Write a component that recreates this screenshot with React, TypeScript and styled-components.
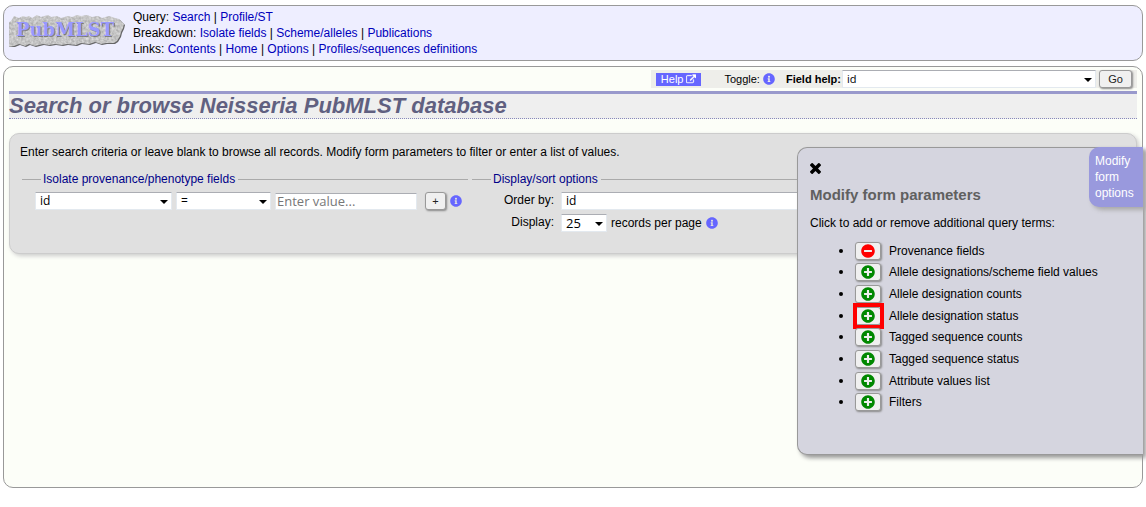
import React from "react";
import styled, { createGlobalStyle } from "styled-components";
import { FaInfoCircle, FaMinusCircle, FaPlusCircle } from "react-icons/fa";

const GlobalStyle = createGlobalStyle`
  * { box-sizing: border-box; }
  body {
    margin: 0;
    background: #fff;
    color: #000;
    font: 12px/16px "Liberation Sans", Arial, sans-serif;
  }
`;

const Page = styled.div`
  position: relative;
  display: flex;
  flex-direction: column;
  gap: 5px;
  min-height: 100vh;
  padding: 5px 3px 19px;
  overflow: hidden;
`;

const Header = styled.header`
  display: flex;
  gap: 4px;
  padding: 3px 5px;
  border: 1px solid #999;
  border-radius: 10px;
  background: #eef;
`;

const LogoLink = styled.a`
  padding-top: 4px;
  svg { display: block; }
`;

const NavLink = styled.a`
  color: #00b;
  text-decoration: none;
`;

const Main = styled.main`
  flex: 1;
  padding: 3px 5px;
  border: 1px solid #999;
  border-radius: 10px;
  background: #fcfef8;
`;

const Toolbar = styled.form`
  display: flex;
  align-items: center;
  width: fit-content;
  height: 18px;
  margin: 0 0 3px auto;
  padding: 0 5px;
  background: #eeeeea;
  font-size: 11px;
`;

const HelpLink = styled.a`
  display: flex;
  align-items: center;
  gap: 3px;
  height: 13px;
  margin-right: 23px;
  padding: 0 5px;
  background: #66f;
  color: #fff;
  text-decoration: none;
`;

const Toggle = styled.div`
  display: flex;
  align-items: center;
  gap: 3px;
  margin-right: 11px;
`;

const FieldHelpLabel = styled.label`
  margin-right: 1px;
  font-weight: bold;
`;

const InfoLink = styled.a`
  display: flex;
  color: #66f;
  font-size: 12px;
`;

const SelectBox = styled.span<{ $width: string }>`
  display: grid;
  align-items: center;
  width: ${(p) => p.$width};
  &::after {
    content: "";
    grid-area: 1 / 1;
    justify-self: end;
    margin: 2px 4px 0 0;
    border: 4px solid transparent;
    border-top-color: #000;
    border-bottom-width: 0;
    pointer-events: none;
  }
`;

const Select = styled.select<{ $size?: string }>`
  grid-area: 1 / 1;
  width: 100%;
  height: 18px;
  margin: 0;
  padding: 0 4px;
  appearance: none;
  border: 1px solid #e3e9ef;
  border-top-color: #abadb3;
  border-radius: 0;
  background: #fff;
  color: #000;
  font: ${(p) => p.$size || "12px"} "Open Sans", Tahoma, sans-serif;
  line-height: 16px;
`;

const Button = styled.button<{ $width: string }>`
  display: flex;
  align-items: center;
  justify-content: center;
  width: ${(p) => p.$width};
  height: 18px;
  padding: 0;
  border: 1px solid #999;
  border-radius: 3px;
  background: #f0f0f0;
  box-shadow: 1px 1px 2px #888;
  color: #222;
  font: 11px "Liberation Sans", Arial, sans-serif;
`;

const Title = styled.h1`
  margin: 0 0 14px;
  border-top: 3px solid #99c;
  border-bottom: 1px dotted #88b;
  background: #efefef;
  color: #606080;
  font: italic bold 22px/24px "Liberation Sans", Arial, sans-serif;
`;

const QueryBox = styled.form`
  min-height: 121px;
  padding: 10px;
  border: 1px solid #ccc;
  border-radius: 10px;
  background: #e0e0e0;
  box-shadow: 2px 2px 4px #ccc;
`;

const Intro = styled.p`
  margin: 0 0 11px;
`;

const Fieldsets = styled.div`
  display: flex;
  gap: 4px;
  padding-left: 2px;
`;

const Fieldset = styled.fieldset`
  min-width: 0;
  margin: 0;
  padding: 5px 6px 0 13px;
  border: 0 solid #aaa;
  border-top-width: 1px;
`;

const Legend = styled.legend`
  margin-left: 6px;
  padding: 0 3px 0 2px;
  color: #008;
`;

const FieldRow = styled.div`
  display: flex;
  align-items: center;
  gap: 4px;
`;

const ValueInput = styled.input`
  width: 142px;
  height: 17px;
  margin-right: 4px;
  padding: 0 1px;
  border: 1px solid #e3e9ef;
  border-top-color: #abadb3;
  background: #fff;
  font: 13px/15px "Open Sans", Tahoma, sans-serif;
  &::placeholder { color: #777; }
`;

const OptionGrid = styled.div`
  display: grid;
  grid-template-columns: 69px auto;
  gap: 4px 7px;
`;

const OptionLabel = styled.label`
  text-align: right;
`;

const SidePanel = styled.aside`
  position: absolute;
  top: 147px;
  right: 3px;
  width: 346px;
  height: 308px;
  padding: 15px 12px;
  border: 1px solid #999;
  border-right: 0;
  border-radius: 10px 0 0 10px;
  background: #d5d5df;
  box-shadow: 3px 3px 4px #999;
`;

const PanelTab = styled.a`
  position: absolute;
  top: -1px;
  right: 0;
  width: 54px;
  padding: 6px;
  border-radius: 10px 0 0 10px;
  background: #99d;
  box-shadow: 3px 3px 4px #aaa;
  color: #fff;
  text-decoration: none;
`;

const CloseButton = styled.button`
  display: block;
  padding: 0;
  border: 0;
  background: none;
  svg { display: block; }
`;

const PanelTitle = styled.h2`
  margin: 11px 0 10px;
  color: #606060;
  font-size: 15px;
  line-height: 20px;
`;

const PanelText = styled.p`
  margin: 0 0 9px;
`;

const TermList = styled.ul`
  display: grid;
  grid-auto-rows: 1fr;
  height: 173px;
  margin: 0;
  padding: 0 0 0 29px;
  list-style: none;
`;

const Term = styled.li`
  display: flex;
  align-items: center;
  &::before {
    content: "";
    width: 4px;
    height: 4px;
    margin-right: 12px;
    border-radius: 50%;
    background: #000;
  }
`;

const TermLabel = styled.label`
  margin-left: 8px;
`;

const TermButton = styled(Button)<{ $marked: boolean }>`
  position: relative;
  font-size: 14px;
  &::after {
    content: "";
    display: ${(p) => (p.$marked ? "block" : "none")};
    position: absolute;
    inset: -5px -4px -5px -3px;
    border: 4px solid #f00;
  }
`;

const Logo = () => (
  <svg width="120" height="34" viewBox="0 0 120 34" role="img" aria-label="PubMLST">
    <defs>
      <filter id="stone" x="-5%" y="-10%" width="110%" height="125%" colorInterpolationFilters="sRGB">
        <feTurbulence type="fractalNoise" baseFrequency="0.4" numOctaves="2" seed="4" result="noise" />
        <feColorMatrix in="noise" type="matrix" values="0.3 0 0 0 0.62  0.3 0 0 0 0.62  0.3 0 0 0 0.62  0 0 0 0 1" />
        <feComposite in2="SourceGraphic" operator="in" result="grain" />
        <feDropShadow in="grain" dx="1" dy="1" stdDeviation="0.6" floodColor="#555" floodOpacity="0.9" />
      </filter>
    </defs>
    <path
      filter="url(#stone)"
      fill="#bbb"
      d="M2 8 5 3l5 2 4-2 3 1 3-1 3 2 5-3 4 2 7-2 3 2 6-1 4 2 7-2 4 1 5-2 4 1 6-1 5 2 6-1 4 2 7-2 6 2 4 1 3 3 2 2-1 4-2 4-1 4-3 5-3 2-8 0-5 1-6-2-6 2-8-1-5 2-9-1-5 1-7-1-6 1-6-1-8 2-6-2-4 2-6-2-5 2-6 1-3-2-4 0-2-3-4-2 2-6-2-4z"
    />
    <g fontFamily='"DejaVu Serif", serif' fontWeight="bold" fontSize="18">
      <text x="8" y="24" fill="#555" opacity="0.6">PubMLST</text>
      <text x="7" y="23" fill="#99f">PubMLST</text>
    </g>
  </svg>
);

const ExternalIcon = () => (
  <svg width="10" height="10" viewBox="0 0 1792 1600" aria-hidden="true">
    <path
      fill="currentColor"
      d="M1408 928v320q0 119-84.500 203.500T1120 1536H288q-119 0-203.500-84.500T0 1248V416q0-119 84.500-203.500T288 128h704q14 0 23 9t9 23v64q0 14-9 23t-23 9H288q-66 0-113 47t-47 113v832q0 66 47 113t113 47h832q66 0 113-47t47-113V928q0-14 9-23t23-9h64q14 0 23 9t9 23zM1792 64v512q0 26-19 45t-45 19-45-19l-176-176-652 652q-10 10-23 10t-23-10L695 983q-10-10-10-23t10-23l652-652-176-176q-19-19-19-45t19-45 45-19h512q26 0 45 19t19 45z"
      stroke="currentColor"
      strokeWidth="60"
    />
  </svg>
);

const CloseIcon = () => (
  <svg width="11" height="11" viewBox="110 366 1188 1188" aria-hidden="true">
    <path d="M1298 1322q0 40-28 68l-136 136q-28 28-68 28t-68-28l-294-294-294 294q-28 28-68 28t-68-28l-136-136q-28-28-28-68t28-68l294-294-294-294q-28-28-28-68t28-68l136-136q28-28 68-28t68 28l294 294 294-294q28-28 68-28t68 28l136 136q28 28 28 68t-28 68l-294 294 294 294q28 28 28 68z" />
  </svg>
);

const menu = [
  { name: "Query", links: ["Search", "Profile/ST"] },
  { name: "Breakdown", links: ["Isolate fields", "Scheme/alleles", "Publications"] },
  { name: "Links", links: ["Contents", "Home", "Options", "Profiles/sequences definitions"] },
];

const terms = [
  { label: "Provenance fields", shown: true },
  { label: "Allele designations/scheme field values" },
  { label: "Allele designation counts" },
  { label: "Allele designation status", marked: true },
  { label: "Tagged sequence counts" },
  { label: "Tagged sequence status" },
  { label: "Attribute values list" },
  { label: "Filters" },
];

const Info = () => (
  <InfoLink href="#info" aria-label="Information">
    <FaInfoCircle />
  </InfoLink>
);

export default function App() {
  return (
    <Page>
      <GlobalStyle />
      <Header>
        <LogoLink href="#home">
          <Logo />
        </LogoLink>
        <nav>
          {menu.map((line) => (
            <div key={line.name}>
              {line.name}:{" "}
              {line.links.map((text, i) => (
                <React.Fragment key={text}>
                  {i > 0 && " | "}
                  <NavLink href="#nav">{text}</NavLink>
                </React.Fragment>
              ))}
            </div>
          ))}
        </nav>
      </Header>

      <Main>
        <Toolbar>
          <HelpLink href="#help">
            Help <ExternalIcon />
          </HelpLink>
          <Toggle>
            Toggle: <Info />
          </Toggle>
          <FieldHelpLabel htmlFor="field-help">Field help:</FieldHelpLabel>
          <SelectBox $width="254px">
            <Select id="field-help" $size="11px">
              <option>id</option>
            </Select>
          </SelectBox>
          &nbsp;
          <Button type="button" $width="33px">
            Go
          </Button>
        </Toolbar>

        <Title>Search or browse Neisseria PubMLST database</Title>

        <QueryBox>
          <Intro>
            Enter search criteria or leave blank to browse all records. Modify form parameters to
            filter or enter a list of values.
          </Intro>
          <Fieldsets>
            <Fieldset>
              <Legend>Isolate provenance/phenotype fields</Legend>
              <FieldRow>
                <SelectBox $width="137px">
                  <Select aria-label="Field">
                    <option>id</option>
                  </Select>
                </SelectBox>
                <SelectBox $width="95px">
                  <Select aria-label="Operator">
                    <option>=</option>
                  </Select>
                </SelectBox>
                <ValueInput aria-label="Value" placeholder="Enter value..." />
                <Button type="button" $width="21px">
                  +
                </Button>
                <Info />
              </FieldRow>
            </Fieldset>
            <Fieldset>
              <Legend>Display/sort options</Legend>
              <OptionGrid>
                <OptionLabel htmlFor="order">Order by:</OptionLabel>
                <SelectBox $width="254px">
                  <Select id="order">
                    <option>id</option>
                  </Select>
                </SelectBox>
                <OptionLabel htmlFor="display">Display:</OptionLabel>
                <FieldRow>
                  <SelectBox $width="46px">
                    <Select id="display" $size="13px">
                      <option>25</option>
                    </Select>
                  </SelectBox>
                  records per page <Info />
                </FieldRow>
              </OptionGrid>
            </Fieldset>
          </Fieldsets>
        </QueryBox>
      </Main>

      <SidePanel>
        <PanelTab href="#modify">Modify form options</PanelTab>
        <CloseButton type="button" aria-label="Close">
          <CloseIcon />
        </CloseButton>
        <PanelTitle>Modify form parameters</PanelTitle>
        <PanelText>Click to add or remove additional query terms:</PanelText>
        <TermList>
          {terms.map((term, i) => (
            <Term key={term.label}>
              <TermButton type="button" id={`term-${i}`} $width="26px" $marked={!!term.marked}>
                {term.shown ? <FaMinusCircle color="#f00" /> : <FaPlusCircle color="#080" />}
              </TermButton>
              <TermLabel htmlFor={`term-${i}`}>{term.label}</TermLabel>
            </Term>
          ))}
        </TermList>
      </SidePanel>
    </Page>
  );
}
